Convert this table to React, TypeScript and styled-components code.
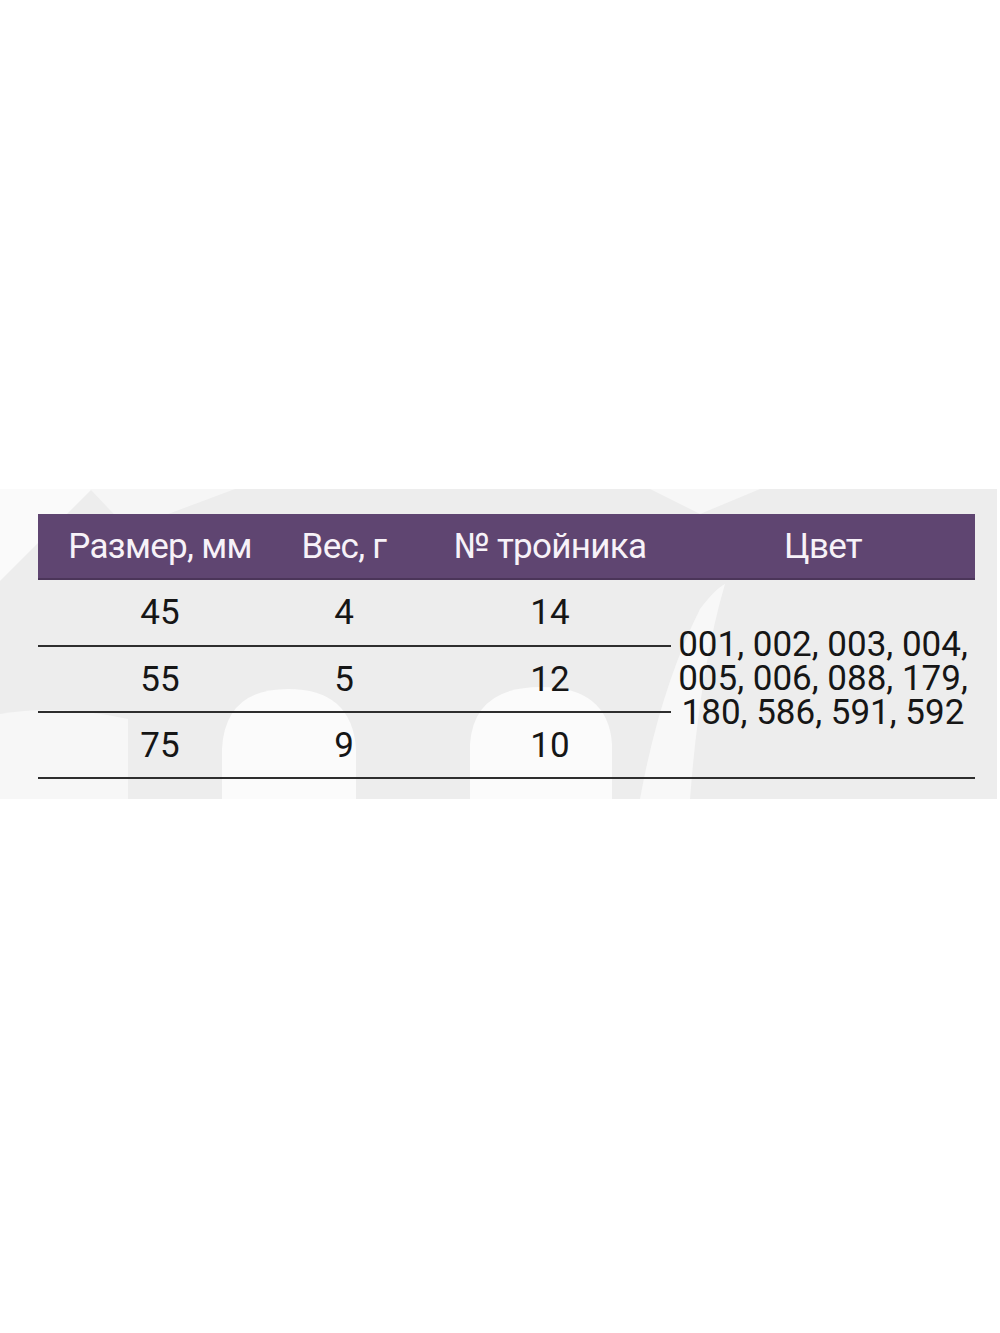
import React from 'react';
import styled, { createGlobalStyle } from 'styled-components';

const GlobalStyle = createGlobalStyle`
  html, body {
    margin: 0;
    padding: 0;
    background: #ffffff;
  }
  body {
    font-family: Roboto, "Liberation Sans", sans-serif;
  }
`;

const Page = styled.div`
  width: 1000px;
  height: 1333px;
  padding-top: 489px;
  box-sizing: border-box;
`;

const Band = styled.div`
  position: relative;
  width: 997px;
  height: 310px;
  background: #ededed;
  overflow: hidden;
  padding: 25px 0 0 38px;
  box-sizing: border-box;
`;

const Backdrop = styled.svg`
  position: absolute;
  inset: 0;
  width: 100%;
  height: 100%;
`;

const Table = styled.div`
  position: relative;
  width: 937px;
  display: grid;
  grid-template-columns: 221px 170px 242px 304px;
  grid-template-rows: 66px 67px 66px 66px;
`;

const HeadCell = styled.div<{ $first?: boolean }>`
  background: #5f4571;
  border-bottom: 2px solid #4b3559;
  color: #f7f2f8;
  font-size: 35px;
  letter-spacing: -0.7px;
  display: flex;
  align-items: center;
  justify-content: center;
  padding-left: ${p => (p.$first ? '23px' : '0')};
  box-sizing: border-box;
`;

const Cell = styled.div<{ $first?: boolean }>`
  color: #161616;
  font-size: 35px;
  display: flex;
  align-items: center;
  justify-content: center;
  border-bottom: 2px solid #2e2e2e;
  padding-left: ${p => (p.$first ? '23px' : '0')};
  box-sizing: border-box;
`;

const ColorCell = styled.div`
  grid-column: 4;
  grid-row: 2 / span 3;
  color: #161616;
  font-size: 35px;
  line-height: 34px;
  text-align: center;
  display: flex;
  align-items: center;
  justify-content: center;
  border-bottom: 2px solid #2e2e2e;
  box-sizing: border-box;
`;

const headers = ['Размер, мм', 'Вес, г', '№ тройника', 'Цвет'];

const rows = [
  ['45', '4', '14'],
  ['55', '5', '12'],
  ['75', '9', '10'],
];

const colors = ['001, 002, 003, 004,', '005, 006, 088, 179,', '180, 586, 591, 592'];

export default function App() {
  return (
    <Page>
      <GlobalStyle />
      <Band>
        <Backdrop viewBox="0 0 997 310" preserveAspectRatio="none">
          <path d="M0 0 H92 L0 92 Z" fill="#fafafa" />
          <path d="M90 0 H235 L128 40 Z" fill="#f6f6f6" />
          <path d="M0 225 Q60 215 128 230 V310 H0 Z" fill="#f7f7f7" />
          <path d="M222 310 V260 Q225 200 288 200 Q352 200 356 260 V310 Z" fill="#fbfbfb" />
          <path d="M470 310 V255 Q474 198 541 198 Q608 198 612 255 V310 Z" fill="#fbfbfb" />
          <path d="M640 310 Q660 200 700 120 Q715 100 725 95 Q700 180 690 310 Z" fill="#f8f8f8" />
          <path d="M650 0 H760 L700 25 Z" fill="#f7f7f7" />
        </Backdrop>
        <Table>
          {headers.map((h, i) => (
            <HeadCell key={h} $first={i === 0}>{h}</HeadCell>
          ))}
          {rows.map((r, ri) => (
            <React.Fragment key={ri}>
              {r.map((v, ci) => (
                <Cell key={ci} $first={ci === 0} style={{ gridRow: ri + 2, gridColumn: ci + 1 }}>
                  {v}
                </Cell>
              ))}
            </React.Fragment>
          ))}
          <ColorCell>
            <div>
              {colors.map(c => (
                <div key={c}>{c}</div>
              ))}
            </div>
          </ColorCell>
        </Table>
      </Band>
    </Page>
  );
}
